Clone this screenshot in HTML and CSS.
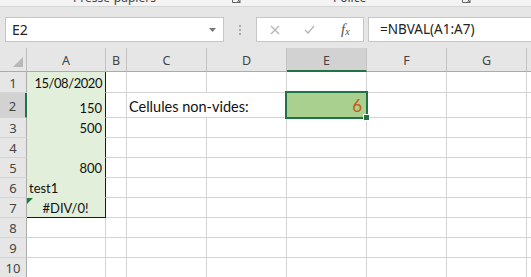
FILE: index.html
```html
<!DOCTYPE html>
<html lang="fr">
<head>
<meta charset="utf-8">
<title>Excel</title>
<link rel="stylesheet" href="styles.css">
</head>
<body>
<div class="app">
  <div class="ribbon">
    <span class="rlabel rl-clip">Presse-papiers</span>
    <svg class="launcher l1" width="9" height="9" viewBox="0 0 9 9"><path d="M0.5 0.5 V8.5 H8.5 M3 3 L8 8 M5 8 H8 V5" fill="none" stroke="#666" stroke-width="1"/></svg>
    <span class="rlabel rl-font">Police</span>
    <svg class="launcher l2" width="9" height="9" viewBox="0 0 9 9"><path d="M0.5 0.5 V8.5 H8.5 M3 3 L8 8 M5 8 H8 V5" fill="none" stroke="#666" stroke-width="1"/></svg>
  </div>
  <div class="fbar">
    <div class="namebox">
      <span class="nb-text">E2</span>
      <svg class="nb-arrow" width="7" height="4" viewBox="0 0 7 4"><path d="M0 0 H7 L3.5 4 Z" fill="#777"/></svg>
    </div>
    <div class="grip"><i></i><i></i><i></i></div>
    <div class="fbtns">
      <span class="fbtn"><svg width="10" height="10" viewBox="0 0 10 10"><path d="M1 1 L9 9 M9 1 L1 9" stroke="#b4b4b4" stroke-width="1.3" fill="none"/></svg></span>
      <span class="fbtn"><svg width="11" height="9" viewBox="0 0 11 9"><path d="M1 5 L4 8 L10 1" stroke="#b4b4b4" stroke-width="1.3" fill="none"/></svg></span>
      <span class="fbtn fx"><i>f<sub>x</sub></i></span>
    </div>
    <div class="formula">=NBVAL(A1:A7)</div>
  </div>
  <div class="sheet">
    <div class="corner"><span class="tri"></span></div>
    <div class="hd">A</div><div class="hd">B</div><div class="hd">C</div><div class="hd">D</div><div class="hd sel">E</div><div class="hd">F</div><div class="hd">G</div><div class="hd hd-last"></div>

    <div class="rh">1</div>
    <div class="c a r date">15/08/2020</div><div class="c"></div><div class="c"></div><div class="c"></div><div class="c"></div><div class="c"></div><div class="c"></div><div class="c"></div>

    <div class="rh rsel">2</div>
    <div class="c a r">150</div><div class="c"></div><div class="c c-label">Cellules non-vides:</div><div class="c e2 r">6</div><div class="c"></div><div class="c"></div><div class="c"></div>

    <div class="rh">3</div>
    <div class="c a r">500</div><div class="c"></div><div class="c"></div><div class="c"></div><div class="c"></div><div class="c"></div><div class="c"></div><div class="c"></div>

    <div class="rh">4</div>
    <div class="c a"></div><div class="c"></div><div class="c"></div><div class="c"></div><div class="c"></div><div class="c"></div><div class="c"></div><div class="c"></div>

    <div class="rh">5</div>
    <div class="c a r">800</div><div class="c"></div><div class="c"></div><div class="c"></div><div class="c"></div><div class="c"></div><div class="c"></div><div class="c"></div>

    <div class="rh">6</div>
    <div class="c a">test1</div><div class="c"></div><div class="c"></div><div class="c"></div><div class="c"></div><div class="c"></div><div class="c"></div><div class="c"></div>

    <div class="rh">7</div>
    <div class="c a a-last ctr err">#DIV/0!</div><div class="c"></div><div class="c"></div><div class="c"></div><div class="c"></div><div class="c"></div><div class="c"></div><div class="c"></div>

    <div class="rh">8</div>
    <div class="c"></div><div class="c"></div><div class="c"></div><div class="c"></div><div class="c"></div><div class="c"></div><div class="c"></div><div class="c"></div>

    <div class="rh">9</div>
    <div class="c"></div><div class="c"></div><div class="c"></div><div class="c"></div><div class="c"></div><div class="c"></div><div class="c"></div><div class="c"></div>

    <div class="rh">10</div>
    <div class="c"></div><div class="c"></div><div class="c"></div><div class="c"></div><div class="c"></div><div class="c"></div><div class="c"></div><div class="c"></div>

    <div class="selection"></div>
    <div class="handle"></div>
  </div>
</div>
</body>
</html>
```
FILE: styles.css
```css
* { box-sizing: border-box; }
html, body { margin: 0; padding: 0; background: #fff; }
.app {
  width: 531px;
  height: 277px;
  overflow: hidden;
  font-family: "Noto Sans", "Open Sans", sans-serif;
}

/* ribbon strip (cropped) */
.ribbon {
  height: 7px;
  background: #f3f3f3;
  border-bottom: 1px solid #d6d6d6;
  overflow: hidden;
  display: flex;
  align-items: flex-start;
}
.rlabel {
  font-size: 12px;
  line-height: 12px;
  color: #444;
  margin-top: -8px;
  white-space: nowrap;
}
.rl-clip { margin-left: 73px; }
.launcher { margin-top: -6px; flex: none; }
.l1 { margin-left: 76px; }
.rl-font { margin-left: 92px; }
.l2 { margin-left: 96px; }

/* formula bar */
.fbar {
  height: 41px;
  background: #e6e6e6;
  display: flex;
  align-items: flex-start;
  padding: 10px 0 0 5px;
}
.namebox {
  width: 219px;
  height: 25px;
  background: #fff;
  border: 1px solid #c6c6c6;
  display: flex;
  align-items: center;
  padding: 0 7px 0 6px;
  flex: none;
}
.nb-text { font-size: 14px; color: #222; flex: 1; }
.nb-arrow { flex: none; }
.grip {
  width: 32px;
  height: 25px;
  flex: none;
  display: flex;
  flex-direction: column;
  align-items: center;
  justify-content: center;
  gap: 2px;
}
.grip i { display: block; width: 2px; height: 2px; background: #aaa; }
.fbtns {
  width: 108px;
  height: 25px;
  background: #fff;
  border: 1px solid #c6c6c6;
  display: flex;
  flex: none;
}
.fbtn {
  width: 35.33px;
  display: flex;
  align-items: center;
  justify-content: center;
}
.fx i {
  font-family: "Liberation Serif", serif;
  font-size: 15px;
  color: #555;
  line-height: 1;
}
.fx sub { font-size: 10px; vertical-align: -1px; }
.formula {
  flex: 1;
  margin-left: 4px;
  height: 25px;
  background: #fff;
  border: 1px solid #c6c6c6;
  border-right: none;
  font-size: 13.5px;
  line-height: 23px;
  padding-left: 11px;
  color: #222;
  white-space: nowrap;
}

/* sheet grid */
.sheet {
  position: relative;
  display: grid;
  grid-template-columns: 27px 79px 21px 80px 80px 80px 80px 80px 1fr;
  grid-template-rows: 24px 21px 25px repeat(8, 20px);
}
.corner {
  background: #e6e6e6;
  border-right: 1px solid #bdbdbd;
  border-bottom: 1px solid #ababab;
  display: flex;
  align-items: flex-end;
  justify-content: flex-end;
  padding: 0 3px 4px 0;
}
.tri {
  width: 0; height: 0;
  border-left: 10px solid transparent;
  border-bottom: 10px solid #b8b8b8;
}
.hd {
  background: #e6e6e6;
  border-right: 1px solid #c3c3c3;
  border-bottom: 1px solid #ababab;
  display: flex;
  align-items: center;
  justify-content: center;
  font-size: 12.5px;
  color: #444;
  padding-top: 2px;
}
.hd.sel {
  background: #d2d2d2;
  border-bottom: 2px solid #217346;
}
.hd-last { border-right: none; }
.rh {
  background: #e6e6e6;
  border-right: 1px solid #ababab;
  border-bottom: 1px solid #d4d4d4;
  display: flex;
  align-items: center;
  justify-content: center;
  font-size: 13px;
  color: #444;
  padding-top: 1px;
}
.rh.rsel {
  background: #d2d2d2;
  border-right: 2px solid #217346;
}
.c {
  border-right: 1px solid #d4d4d4;
  border-bottom: 1px solid #d4d4d4;
  font-family: "Lato", "Noto Sans", sans-serif;
  font-size: 13px;
  line-height: 13px;
  color: #111;
  display: flex;
  align-items: flex-end;
  padding: 0 3px 2px 2px;
  white-space: nowrap;
}
.r { justify-content: flex-end; }
.ctr { justify-content: center; }
.date { letter-spacing: -0.45px; }
.a {
  background: #e2efda;
  border-right-color: #1a1a1a;
  border-bottom-color: #e2efda;
}
.a-last { border-bottom-color: #1a1a1a; }
.err { position: relative; }
.err::before {
  content: "";
  position: absolute;
  left: 0; top: 0;
  border-top: 6px solid #1e7b3a;
  border-right: 6px solid transparent;
}
.c-label {
  grid-column: span 2;
  font-size: 14.5px;
  line-height: 15px;
  padding-bottom: 3px;
}
.e2 {
  background: #a9d08e;
  color: #c65911;
  font-size: 17px;
  line-height: 17px;
  padding-bottom: 3px;
  padding-right: 4px;
}
.selection {
  position: absolute;
  left: 285px;
  top: 43px;
  width: 83px;
  height: 28px;
  border: 2px solid #217346;
  pointer-events: none;
}
.handle {
  position: absolute;
  left: 363px;
  top: 66px;
  width: 7px;
  height: 7px;
  background: #217346;
  border: 1px solid #fff;
}
```
